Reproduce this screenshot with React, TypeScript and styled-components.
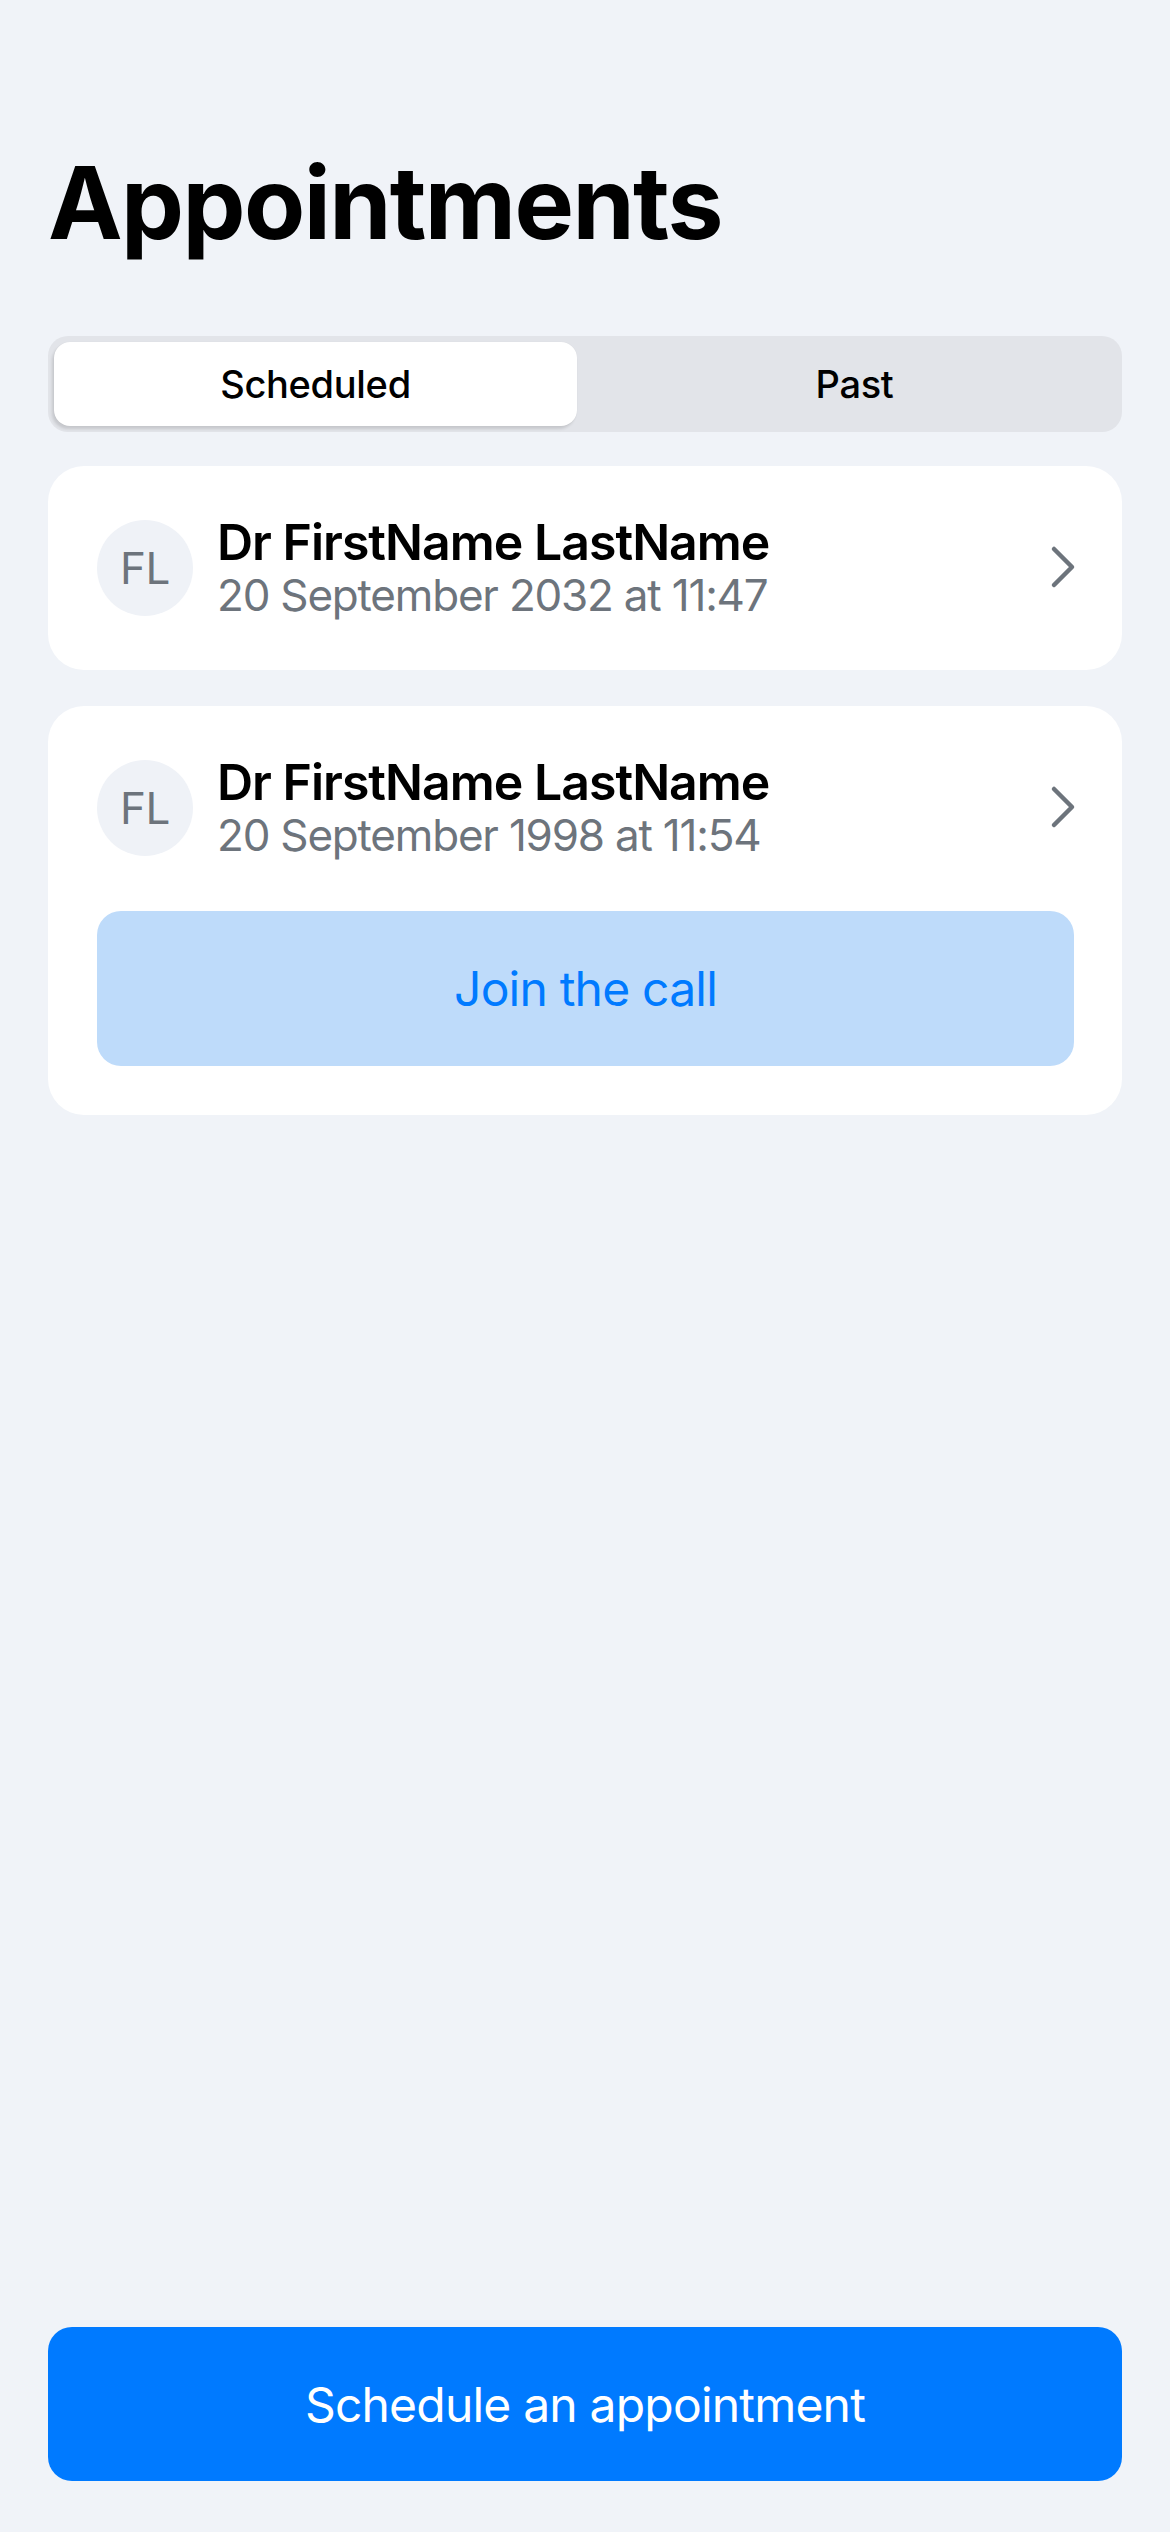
import * as React from 'react';
import styled, { createGlobalStyle } from 'styled-components';

const GlobalStyle = createGlobalStyle`
  html, body {
    margin: 0;
    padding: 0;
    background: #f0f3f8;
  }
  body {
    font-family: Inter, "Noto Sans", "Liberation Sans", sans-serif;
    -webkit-font-smoothing: antialiased;
  }
  * {
    box-sizing: border-box;
  }
`;

const Screen = styled.div`
  min-height: 2532px;
  display: flex;
  flex-direction: column;
  padding: 143px 48px 51px;
  background: #f0f3f8;
`;

const Title = styled.h1`
  margin: 0 0 73px;
  font-size: 100px;
  line-height: 120px;
  font-weight: 700;
  letter-spacing: -1.6px;
  color: #000;
`;

const Segmented = styled.div`
  display: grid;
  grid-template-columns: 1fr 1fr;
  column-gap: 16px;
  height: 96px;
  padding: 6px;
  border-radius: 20px;
  background: #e2e4e9;
`;

const Segment = styled.div<{ $active?: boolean }>`
  display: flex;
  align-items: center;
  justify-content: center;
  border-radius: 16px;
  font-size: 38px;
  font-weight: 500;
  letter-spacing: -0.3px;
  color: #000;
  background: ${(p) => (p.$active ? '#fff' : 'transparent')};
  box-shadow: ${(p) =>
    p.$active ? '-2px 3px 3px rgba(0, 0, 0, 0.12), 0 0 1px rgba(0, 0, 0, 0.08)' : 'none'};
`;

const List = styled.div`
  display: flex;
  flex-direction: column;
  gap: 36px;
  margin-top: 34px;
`;

const Card = styled.div`
  display: flex;
  flex-direction: column;
  gap: 50px;
  padding: 49px 44px 49px 49px;
  border-radius: 36px;
  background: #fff;
`;

const Row = styled.div`
  display: flex;
  align-items: center;
  gap: 24px;
`;

const Avatar = styled.div`
  flex: none;
  width: 96px;
  height: 96px;
  border-radius: 50%;
  background: #eff2f7;
  color: #6d747c;
  display: flex;
  align-items: center;
  justify-content: center;
  font-size: 44px;
  font-weight: 400;
  letter-spacing: -0.5px;
`;

const Info = styled.div`
  flex: 1;
  display: flex;
  flex-direction: column;
`;

const Name = styled.div`
  font-size: 50px;
  line-height: 54px;
  font-weight: 600;
  letter-spacing: -1px;
  color: #000;
`;

const DateText = styled.div`
  font-size: 44px;
  line-height: 52px;
  font-weight: 400;
  letter-spacing: -1.2px;
  color: #6d747c;
`;

const Chevron = styled.svg`
  flex: none;
  width: 30px;
  height: 48px;
`;

const JoinButton = styled.button`
  height: 155px;
  margin-right: 4px;
  border: 0;
  border-radius: 24px;
  background: #bedbfa;
  color: #007aff;
  font-family: inherit;
  font-size: 48px;
  font-weight: 400;
  letter-spacing: -0.8px;
`;

const Spacer = styled.div`
  flex: 1;
`;

const PrimaryButton = styled.button`
  height: 154px;
  border: 0;
  border-radius: 24px;
  background: #007aff;
  color: #fff;
  font-family: inherit;
  font-size: 48px;
  font-weight: 400;
  letter-spacing: -0.8px;
`;

type Appointment = {
  initials: string;
  doctor: string;
  date: string;
  canJoin?: boolean;
};

const appointments: Appointment[] = [
  { initials: 'FL', doctor: 'Dr FirstName LastName', date: '20 September 2032 at 11:47' },
  {
    initials: 'FL',
    doctor: 'Dr FirstName LastName',
    date: '20 September 1998 at 11:54',
    canJoin: true,
  },
];

const ChevronIcon = () => (
  <Chevron viewBox="0 0 30 48">
    <polyline
      points="6,5 24,23 6,41"
      fill="none"
      stroke="#6d747c"
      strokeWidth="4.5"
      strokeLinecap="round"
      strokeLinejoin="round"
    />
  </Chevron>
);

export default function App() {
  return (
    <>
      <GlobalStyle />
      <Screen>
        <Title>Appointments</Title>
        <Segmented>
          <Segment $active>Scheduled</Segment>
          <Segment>Past</Segment>
        </Segmented>
        <List>
          {appointments.map((a, i) => (
            <Card key={i}>
              <Row>
                <Avatar>{a.initials}</Avatar>
                <Info>
                  <Name>{a.doctor}</Name>
                  <DateText>{a.date}</DateText>
                </Info>
                <ChevronIcon />
              </Row>
              {a.canJoin && <JoinButton>Join the call</JoinButton>}
            </Card>
          ))}
        </List>
        <Spacer />
        <PrimaryButton>Schedule an appointment</PrimaryButton>
      </Screen>
    </>
  );
}
